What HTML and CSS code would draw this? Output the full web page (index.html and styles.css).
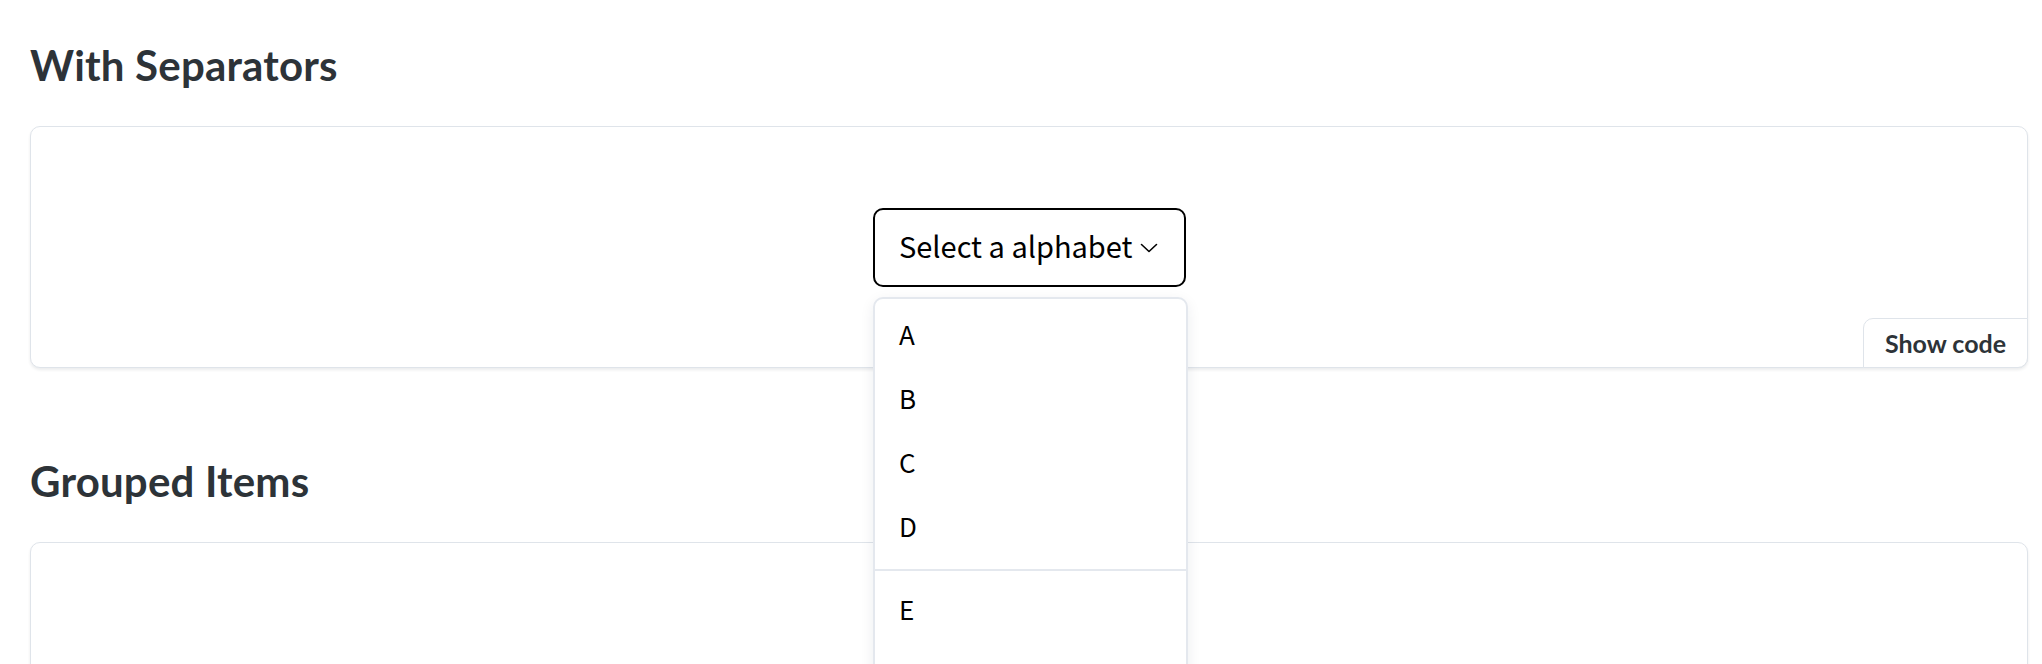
FILE: index.html
```html
<!DOCTYPE html>
<html lang="en">
<head>
<meta charset="utf-8">
<title>Dropdown examples</title>
<link rel="stylesheet" href="styles.css">
</head>
<body>
<main class="page">
  <section class="example">
    <h2 class="example-title">With Separators</h2>
    <div class="demo-card">
      <div class="dropdown">
        <button class="dropdown-trigger" type="button">
          <span class="trigger-label">Select a alphabet</span>
          <svg class="chevron" width="18" height="10" viewBox="0 0 18 10" aria-hidden="true"><path d="M1.5 1.5 L9 8.5 L16.5 1.5" fill="none" stroke="#000" stroke-width="1.6" stroke-linecap="round" stroke-linejoin="round"/></svg>
        </button>
        <ul class="dropdown-menu">
          <li class="menu-item">A</li>
          <li class="menu-item">B</li>
          <li class="menu-item">C</li>
          <li class="menu-item">D</li>
          <li class="menu-sep" role="separator"></li>
          <li class="menu-item">E</li>
          <li class="menu-item">F</li>
          <li class="menu-item">G</li>
        </ul>
      </div>
      <button class="show-code" type="button">Show code</button>
    </div>
  </section>
  <section class="example">
    <h2 class="example-title">Grouped Items</h2>
    <div class="demo-card demo-card--tall"></div>
  </section>
</main>
</body>
</html>
```

FILE: styles.css
```css
html, body {
  margin: 0;
  padding: 0;
  background: #ffffff;
}

.page {
  padding: 40px 14px 0 30px;
  font-family: "Lato", "Noto Sans", sans-serif;
  color: #2d3338;
}

.example {
  display: flex;
  flex-direction: column;
}

.example + .example {
  margin-top: 88px;
}

.example-title {
  margin: 0 0 36px 0;
  font-size: 42px;
  line-height: 50px;
  font-weight: 700;
  letter-spacing: 0.2px;
  color: #2d3338;
}

.demo-card {
  position: relative;
  height: 240px;
  border: 1px solid #dfe4ea;
  border-radius: 10px;
  box-shadow: 0 2px 3px rgba(30, 40, 60, 0.09);
  display: flex;
  align-items: center;
  justify-content: center;
  background: #fff;
}

.demo-card--tall {
  height: 300px;
}

.dropdown {
  position: relative;
  z-index: 5;
  margin-left: 1px;
}

.dropdown-trigger {
  display: flex;
  align-items: center;
  gap: 8px;
  width: 313px;
  height: 79px;
  padding: 0 0 3px 24px;
  border: 2px solid #000;
  border-radius: 10px;
  background: #fff;
  font-family: "Noto Sans CJK KR", "Noto Sans", sans-serif;
  font-size: 29px;
  color: #000;
  cursor: pointer;
}

.trigger-label {
  line-height: 1;
}

.chevron {
  margin-top: 4px;
}

.dropdown-menu {
  position: absolute;
  top: 89px;
  left: 0;
  width: 315px;
  margin: 0;
  padding: 3px 0 0 0;
  list-style: none;
  background: #fff;
  border: 2px solid #e4e8ee;
  border-radius: 10px;
  box-shadow: 0 4px 14px rgba(30, 40, 60, 0.08);
  box-sizing: border-box;
  font-family: "Noto Sans CJK KR", "Noto Sans", sans-serif;
  font-size: 26px;
  color: #000;
}

.menu-item {
  height: 64px;
  display: flex;
  align-items: center;
  padding-left: 24px;
}

.menu-sep {
  height: 2px;
  background: #e4e8ee;
  margin: 11px 0 6px 0;
}

.show-code {
  position: absolute;
  right: -1px;
  bottom: -1px;
  width: 165px;
  height: 50px;
  border: 1px solid #dfe4ea;
  border-radius: 10px 0 10px 0;
  background: #fff;
  font-family: "Lato", "Noto Sans", sans-serif;
  font-weight: 700;
  font-size: 25px;
  color: #2d3338;
  padding: 0;
  cursor: pointer;
}
```
